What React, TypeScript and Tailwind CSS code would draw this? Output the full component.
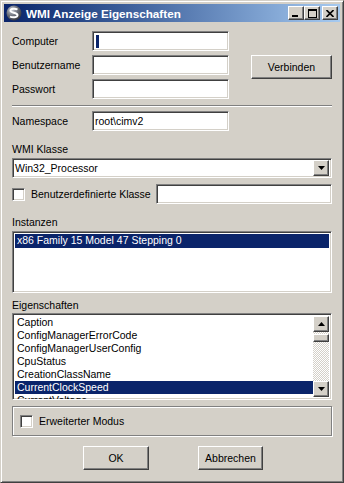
import type { ReactNode } from "react";

const raised =
  "border border-white border-b-[#404040] border-r-[#404040] shadow-[inset_-1px_-1px_0_#808080,inset_1px_1px_0_#d4d0c8] bg-[#d4d0c8]";
const sunken =
  "border border-[#808080] border-b-white border-r-white shadow-[inset_1px_1px_0_#404040,inset_-1px_-1px_0_#d4d0c8]";

function Field({ children, className = "" }: { children?: ReactNode; className?: string }) {
  return (
    <div className={`${sunken} flex h-[20px] items-center bg-white pl-[2px] ${className}`}>{children}</div>
  );
}

function Button({ label, className = "" }: { label: string; className?: string }) {
  return (
    <div className={`${raised} flex items-center justify-center ${className}`}>
      <span>{label}</span>
    </div>
  );
}

function CheckBox() {
  return <div className={`${sunken} size-[13px] shrink-0 bg-white`} />;
}

function Arrow({ up }: { up?: boolean }) {
  return (
    <svg width="7" height="4" viewBox="0 0 7 4">
      <path d={up ? "M3.5 0 L7 4 L0 4 Z" : "M0 0 L7 0 L3.5 4 Z"} fill="#000" />
    </svg>
  );
}

function TitleIcon() {
  return (
    <svg width="16" height="16" viewBox="0 0 16 16">
      <defs>
        <radialGradient id="g" cx="0.35" cy="0.3" r="0.8">
          <stop offset="0" stopColor="#c8ccd4" />
          <stop offset="0.5" stopColor="#6a6e78" />
          <stop offset="1" stopColor="#2a2c34" />
        </radialGradient>
      </defs>
      <circle cx="8" cy="8" r="7.5" fill="url(#g)" />
      <path d="M11.5 4.5 C9 3 4 3.5 4.5 6 C5 8 11 7.5 11.5 10 C12 12.5 6.5 13 4 11.5" stroke="#fff" strokeWidth="2" fill="none" />
    </svg>
  );
}

const props = [
  "Caption",
  "ConfigManagerErrorCode",
  "ConfigManagerUserConfig",
  "CpuStatus",
  "CreationClassName",
  "CurrentClockSpeed",
  "CurrentVoltage",
];

export default function App() {
  return (
    <div
      className="h-[483px] w-[344px] overflow-hidden border border-[#d4d0c8] border-b-[#404040] border-r-[#404040] bg-[#d4d0c8] p-[3px] text-[10.5px] leading-[13px] text-black shadow-[inset_1px_1px_0_#fff,inset_-1px_-1px_0_#808080]"
      style={{ fontFamily: '"Liberation Sans", Arial, sans-serif' }}
    >
      <div className="flex h-[18px] items-center bg-gradient-to-r from-[#0a246a] to-[#a6caf0] pl-[2px] pr-[2px]">
        <TitleIcon />
        <span className="ml-[4px] text-[11.7px] font-bold text-white">WMI Anzeige Eigenschaften</span>
        <div className="ml-auto flex items-center">
          <div className={`${raised} flex h-[14px] w-[16px] items-end justify-center pb-[2px] pr-[2px]`}>
            <div className="h-[2px] w-[6px] bg-black" />
          </div>
          <div className={`${raised} flex h-[14px] w-[16px] items-center justify-center`}>
            <div className="h-[9px] w-[9px] border border-t-2 border-black" />
          </div>
          <div className={`${raised} ml-[2px] flex h-[14px] w-[16px] items-center justify-center`}>
            <svg width="8" height="7" viewBox="0 0 8 7">
              <path d="M0.5 0 L7.5 7 M7.5 0 L0.5 7" stroke="#000" strokeWidth="1.6" />
            </svg>
          </div>
        </div>
      </div>

      <div className="px-[8px]">
        <div className="mt-[9px] flex items-start justify-between">
          <div className="flex flex-col gap-[4px]">
            {["Computer", "Benutzername", "Passwort"].map((l, i) => (
              <div key={l} className="flex items-center">
                <span className="w-[80px]">{l}</span>
                <Field className="w-[137px]">
                  {i === 0 && <span className="ml-[1px] h-[13px] w-[3px] bg-[#0a246a]" />}
                </Field>
              </div>
            ))}
          </div>
          <Button label="Verbinden" className="mt-[24px] h-[24px] w-[81px]" />
        </div>

        <div className="mt-[6px] h-[2px] border-t border-[#808080] border-b border-b-white" />

        <div className="mt-[4px] flex items-center">
          <span className="w-[80px]">Namespace</span>
          <Field className="w-[137px]">root\cimv2</Field>
        </div>

        <div className="mt-[12px]">WMI Klasse</div>
        <div className={`${sunken} mt-[2px] flex h-[20px] items-center bg-white pl-[2px] pr-[2px]`}>
          <span>Win32_Processor</span>
          <div className={`${raised} ml-auto flex h-[16px] w-[16px] items-center justify-center`}>
            <Arrow />
          </div>
        </div>

        <div className="mt-[6px] flex items-center">
          <CheckBox />
          <span className="ml-[6px] w-[125px]">Benutzerdefinierte Klasse</span>
          <Field className="flex-1" />
        </div>

        <div className="mt-[12px]">Instanzen</div>
        <div className={`${sunken} mt-[2px] h-[62px] bg-white p-[2px]`}>
          <div className="h-[14px] bg-[#0a246a] pl-[2px] text-white">x86 Family 15 Model 47 Stepping 0</div>
        </div>

        <div className="mt-[6px]">Eigenschaften</div>
        <div className={`${sunken} mt-[1px] flex h-[87px] overflow-hidden bg-white p-[2px]`}>
          <div className="h-[83px] flex-1 overflow-hidden">
            {props.map((p) => (
              <div
                key={p}
                className={`h-[13px] pl-[2px] ${p === "CurrentClockSpeed" ? "bg-[#0a246a] text-white" : ""}`}
              >
                {p}
              </div>
            ))}
          </div>
          <div className="flex w-[16px] flex-col">
            <div className={`${raised} flex h-[16px] items-center justify-center`}>
              <Arrow up />
            </div>
            <div className="h-[2px] bg-[repeating-conic-gradient(#fff_0_25%,#d4d0c8_0_50%)] bg-[length:2px_2px]" />
            <div className={`${raised} h-[8px]`} />
            <div className="flex-1 bg-[repeating-conic-gradient(#fff_0_25%,#d4d0c8_0_50%)] bg-[length:2px_2px]" />
            <div className={`${raised} flex h-[16px] items-center justify-center`}>
              <Arrow />
            </div>
          </div>
        </div>

        <div className="mt-[6px] flex h-[30px] items-center border border-[#808080] pl-[7px] shadow-[inset_1px_1px_0_#fff,1px_1px_0_#fff]">
          <CheckBox />
          <span className="ml-[6px]">Erweiterter Modus</span>
        </div>

        <div className="mt-[10px] flex">
          <Button label="OK" className="ml-[71px] h-[24px] w-[66px]" />
          <Button label="Abbrechen" className="ml-[49px] h-[24px] w-[65px]" />
        </div>
      </div>
    </div>
  );
}
